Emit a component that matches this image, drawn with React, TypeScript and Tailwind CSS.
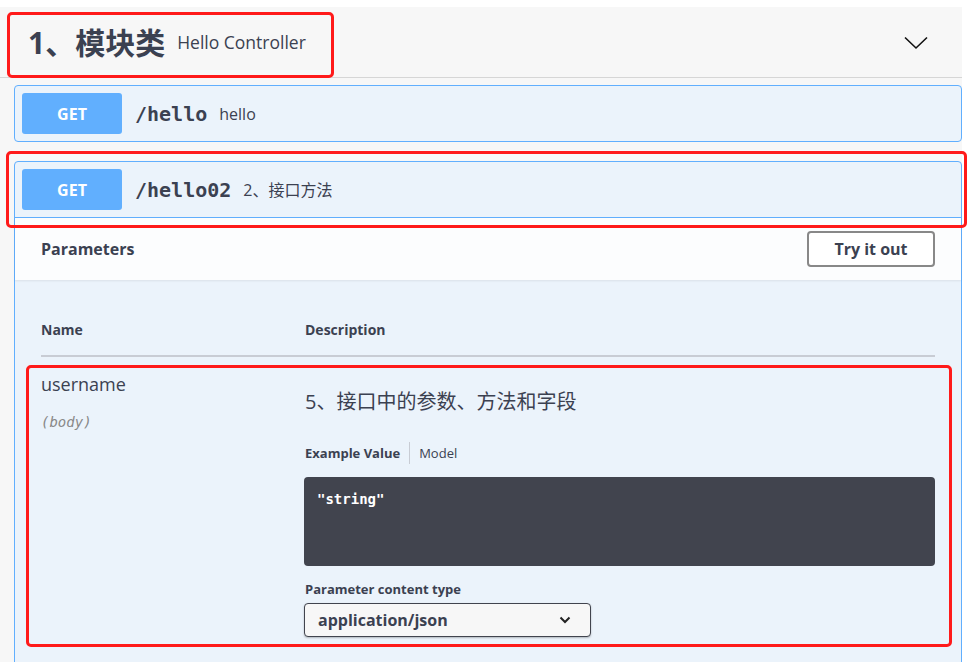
import React from "react";

const sans = { fontFamily: '"Open Sans", "Noto Sans CJK SC", sans-serif' };
const mono = { fontFamily: '"DejaVu Sans Mono", "Liberation Mono", monospace' };

const GetBadge = () => (
  <div
    className="w-[100px] h-[41px] rounded-[3px] bg-[#61affe] text-white text-[16px] font-bold flex items-center justify-center"
    style={sans}
  >
    GET
  </div>
);

const Summary = ({ path, desc, descSize }: any) => (
  <div className="flex items-center p-[7px]">
    <GetBadge />
    <span className="ml-[13px] text-[20px] font-bold text-[#3b4151]" style={mono}>
      {path}
    </span>
    <span className={"ml-[12px] text-[#3b4151] " + descSize} style={sans}>
      {desc}
    </span>
  </div>
);

const Chevron = () => (
  <svg width="24" height="14" viewBox="0 0 24 14" fill="none">
    <path d="M1 1.5 L12 12 L23 1.5" stroke="#111" strokeWidth="1.6" />
  </svg>
);

const SmallChevron = () => (
  <svg width="12" height="8" viewBox="0 0 12 8" fill="none">
    <path d="M1.5 1.5 L6 6 L10.5 1.5" stroke="#222" strokeWidth="2" />
  </svg>
);

const RedBox = ({ cls }: any) => (
  <div className={"absolute border-[3px] border-[#ff1a1a] rounded-[5px] pointer-events-none " + cls} />
);

const App = () => {
  return (
    <div className="relative w-[970px] h-[662px] bg-white overflow-hidden" style={sans}>
      <div className="mt-[7px] w-[962px] h-[655px] bg-[#f7f7f7]">
        {/* tag heading */}
        <div className="h-[71px] border-b border-[#d6d6d6] flex items-center pl-[28px] pr-[34px]">
          <span
            className="text-[30px] font-bold text-[#3b4151]"
            style={{ fontFamily: '"Noto Sans", "Noto Sans CJK SC", sans-serif' }}
          >
            1、模块类
          </span>
          <span className="ml-[12px] text-[17.5px] text-[#3b4151]">Hello Controller</span>
          <div className="ml-auto mt-[2px]">
            <Chevron />
          </div>
        </div>

        <div className="pl-[14px]">
          {/* op 1 */}
          <div className="mt-[7px] border border-[#61affe] rounded-[4px] bg-[#ebf3fb]">
            <Summary path="/hello" desc="hello" descSize="text-[16px]" />
          </div>

          {/* op 2 */}
          <div className="mt-[19px] border border-[#61affe] rounded-t-[4px] bg-[#ebf3fb] h-[520px]">
            <div className="border-b border-[#61affe]">
              <Summary path="/hello02" desc="2、接口方法" descSize="text-[16px]" />
            </div>

            <div className="h-[62px] bg-[#fcfdfe] shadow-[0_1px_2px_rgba(0,0,0,0.08)] flex items-center justify-between px-[26px]">
              <span className="text-[16px] font-bold text-[#3b4151]">Parameters</span>
              <button className="w-[128px] h-[36px] border-2 border-[#888] rounded-[4px] bg-white text-[16px] font-bold text-[#3b4151]">
                Try it out
              </button>
            </div>

            <div className="px-[26px]">
              <div className="pt-[40px] pb-[15px] border-b-2 border-[#c8ccd4] flex text-[14px] font-bold text-[#3b4151] leading-[20px]">
                <div className="w-[264px]">Name</div>
                <div>Description</div>
              </div>

              <div className="flex pt-[15px]">
                <div className="w-[264px]">
                  <div className="text-[18px] leading-[24px] text-[#3b4151]">username</div>
                  <div className="mt-[16px] text-[14px] italic text-[#888]" style={mono}>
                    (body)
                  </div>
                </div>
                <div className="flex-1">
                  <div className="mt-[17px] text-[20px] leading-[26px] text-[#3b4151]">
                    5、接口中的参数、方法和字段
                  </div>
                  <div className="mt-[27px] flex items-center text-[13px] text-[#3b4151] leading-[20px]">
                    <span className="font-bold">Example Value</span>
                    <span className="mx-[9px] w-px h-[22px] bg-[#c8ccd4]" />
                    <span>Model</span>
                  </div>
                  <div className="mt-[13px] -ml-px h-[89px] rounded-[4px] bg-[#41444e] px-[13px] pt-[9px]">
                    <span className="text-[14px] font-bold text-white" style={mono}>
                      "string"
                    </span>
                  </div>
                  <div className="mt-[14px] text-[13px] font-bold text-[#3b4151] leading-[18px]">
                    Parameter content type
                  </div>
                  <div className="mt-[5px] -ml-px w-[287px] h-[34px] border border-[#41444e] rounded-[4px] bg-[#f7f7f7] shadow-[0_1px_2px_rgba(0,0,0,0.25)] flex items-center justify-between pl-[13px] pr-[19px]">
                    <span className="text-[16px] font-bold text-[#3b4151]">application/json</span>
                    <SmallChevron />
                  </div>
                </div>
              </div>
            </div>
          </div>
        </div>
      </div>

      <RedBox cls="left-[7px] top-[12px] w-[327px] h-[66px]" />
      <RedBox cls="left-[6px] top-[151px] w-[961px] h-[77px]" />
      <RedBox cls="left-[26px] top-[365px] w-[926px] h-[282px]" />
    </div>
  );
};

export default App;
